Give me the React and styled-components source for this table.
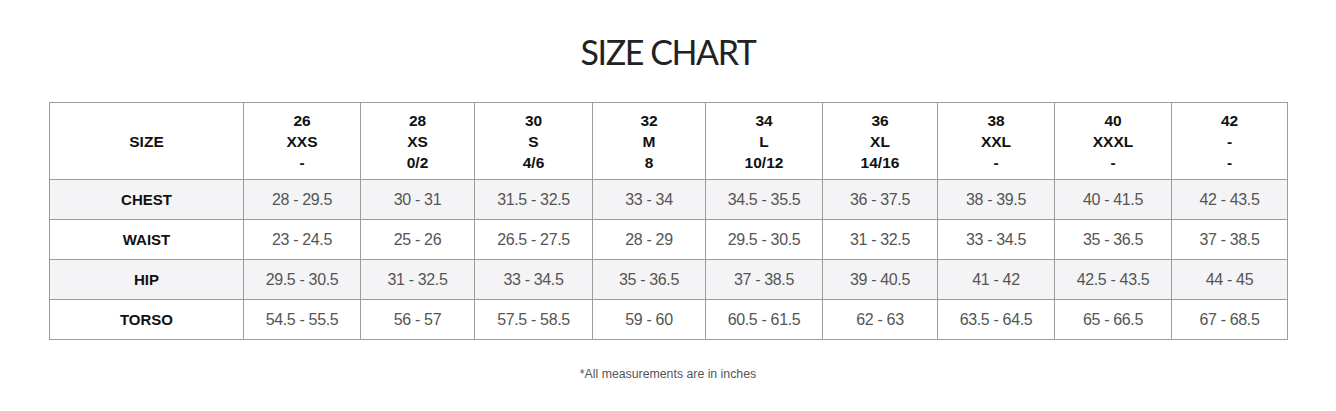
import React from "react";
import styled, { createGlobalStyle } from "styled-components";

const Global = createGlobalStyle`
  html, body { margin: 0; padding: 0; background: #fff; }
  body { font-family: "Liberation Sans", Arial, sans-serif; }
`;

const Page = styled.div`
  width: 1336px;
  height: 411px;
  box-sizing: border-box;
  padding: 30px 49px 0 49px;
  display: flex;
  flex-direction: column;
  align-items: stretch;
`;

const Title = styled.h1`
  margin: 0;
  text-align: center;
  font-family: Lato, "Noto Sans", sans-serif;
  font-weight: 400;
  font-size: 34px;
  line-height: 44px;
  color: #222;
  letter-spacing: -1.4px;
`;

const Table = styled.table`
  margin-top: 28px;
  width: 1238px;
  border-collapse: collapse;
  table-layout: fixed;
  font-family: "Liberation Sans", Arial, sans-serif;
`;

const Row = styled.tr`
  background: ${(p) => (p.$shade ? "#f4f4f6" : "#fff")};
`;

const HeadCell = styled.th`
  border: 1px solid #9c9c9c;
  height: 76px;
  padding: 0;
  text-align: center;
  vertical-align: middle;
  font-size: 15.5px;
  font-weight: 700;
  line-height: 21px;
  color: #111;
`;

const LabelCell = styled.th`
  border: 1px solid #9c9c9c;
  height: 39px;
  padding: 0;
  text-align: center;
  font-size: 15px;
  font-weight: 700;
  color: #111;
`;

const Cell = styled.td`
  border: 1px solid #9c9c9c;
  height: 39px;
  padding: 0;
  text-align: center;
  font-size: 16px;
  color: #555;
  letter-spacing: -0.35px;
`;

const Note = styled.p`
  margin: 27px 0 0;
  text-align: center;
  font-size: 12.3px;
  color: #555;
`;

const widths = [194, 117, 114, 118, 113, 117, 115, 117, 117, 116];

const sizes = [
  ["26", "XXS", "-"],
  ["28", "XS", "0/2"],
  ["30", "S", "4/6"],
  ["32", "M", "8"],
  ["34", "L", "10/12"],
  ["36", "XL", "14/16"],
  ["38", "XXL", "-"],
  ["40", "XXXL", "-"],
  ["42", "-", "-"],
];

const rows = [
  ["CHEST", ["28 - 29.5", "30 - 31", "31.5 - 32.5", "33 - 34", "34.5 - 35.5", "36 - 37.5", "38 - 39.5", "40 - 41.5", "42 - 43.5"]],
  ["WAIST", ["23 - 24.5", "25 - 26", "26.5 - 27.5", "28 - 29", "29.5 - 30.5", "31 - 32.5", "33 - 34.5", "35 - 36.5", "37 - 38.5"]],
  ["HIP", ["29.5 - 30.5", "31 - 32.5", "33 - 34.5", "35 - 36.5", "37 - 38.5", "39 - 40.5", "41 - 42", "42.5 - 43.5", "44 - 45"]],
  ["TORSO", ["54.5 - 55.5", "56 - 57", "57.5 - 58.5", "59 - 60", "60.5 - 61.5", "62 - 63", "63.5 - 64.5", "65 - 66.5", "67 - 68.5"]],
];

export default function App() {
  return (
    <>
      <Global />
      <Page>
        <Title>SIZE CHART</Title>
        <Table>
          <colgroup>
            {widths.map((w, i) => (
              <col key={i} style={{ width: w }} />
            ))}
          </colgroup>
          <thead>
            <Row>
              <HeadCell>SIZE</HeadCell>
              {sizes.map((s, i) => (
                <HeadCell key={i}>
                  {s[0]}
                  <br />
                  {s[1]}
                  <br />
                  {s[2]}
                </HeadCell>
              ))}
            </Row>
          </thead>
          <tbody>
            {rows.map(([label, vals], r) => (
              <Row key={label} $shade={r % 2 === 0}>
                <LabelCell>{label}</LabelCell>
                {vals.map((v, i) => (
                  <Cell key={i}>{v}</Cell>
                ))}
              </Row>
            ))}
          </tbody>
        </Table>
        <Note>*All measurements are in inches</Note>
      </Page>
    </>
  );
}
